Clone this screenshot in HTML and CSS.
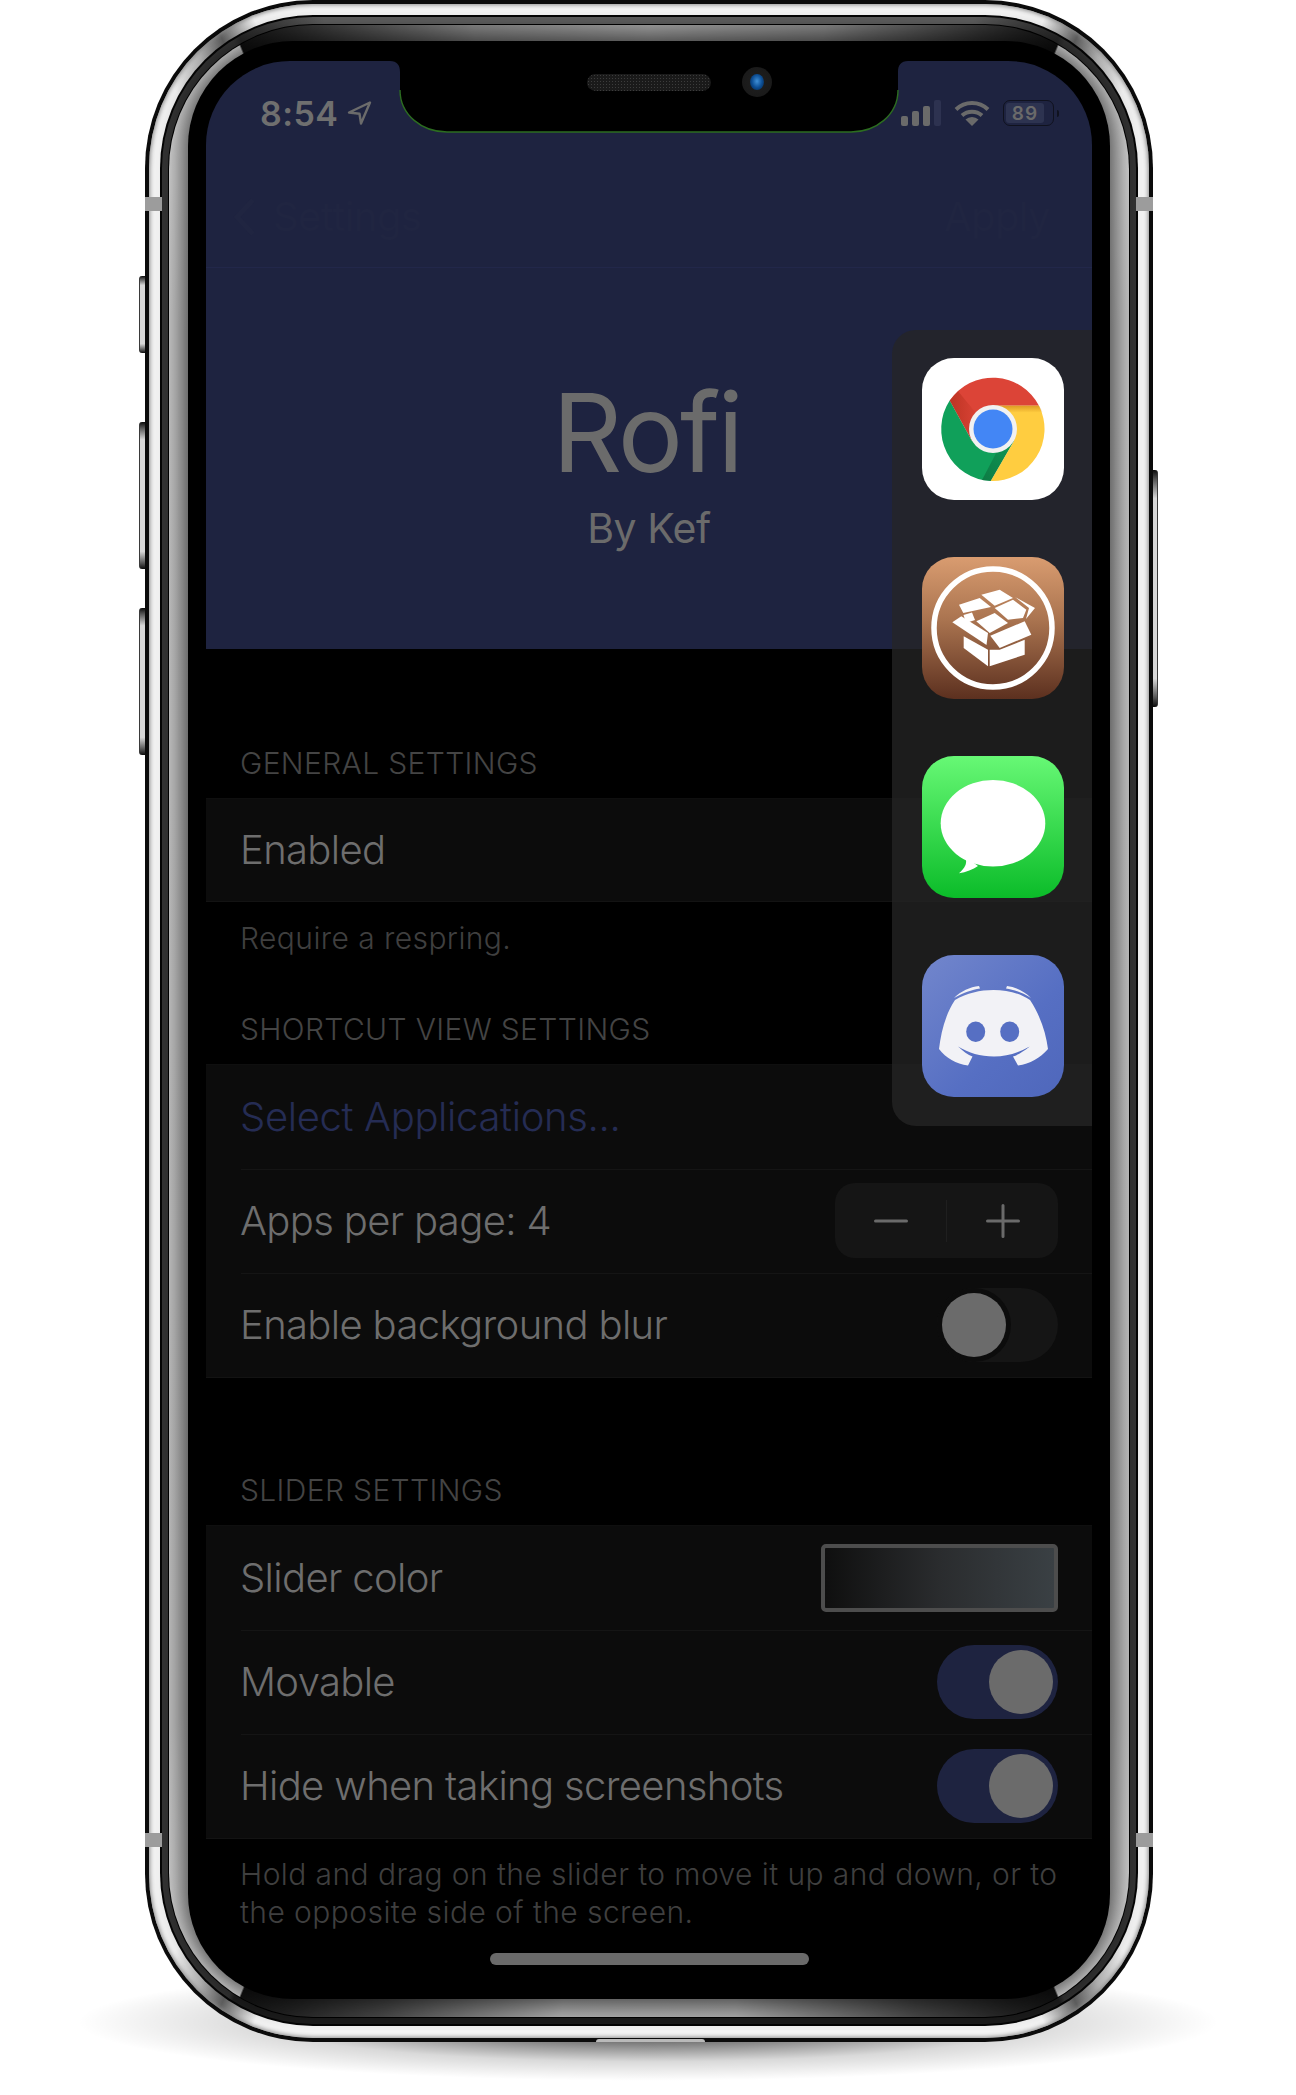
FILE: index.html
```html
<!DOCTYPE html>
<html lang="en">
<head>
<meta charset="utf-8">
<title>Rofi</title>
<link rel="stylesheet" href="styles.css">
</head>
<body>
<div class="stage">
  <div class="phone">
    <span class="btn btn-silent"></span>
    <span class="btn btn-volup"></span>
    <span class="btn btn-voldown"></span>
    <span class="btn btn-power"></span>
    <div class="ring-outer"><div class="ring-white"><div class="ring-thin"><div class="ring-grey"><div class="ring-hair"><div class="ring-silver"><div class="bezel">
      <main class="screen">
        <header class="top">
          <div class="status">
            <div class="status-left">
              <span class="time">8:54</span>
              <svg class="arrow" width="25" height="24" viewBox="0 0 25 24"><path d="M23 1.5 2 11.5l10.5 1.2L14 22.5z" fill="none" stroke="#6b6b6b" stroke-width="2.4" stroke-linejoin="round"/></svg>
            </div>
            <div class="status-right">
              <svg width="40" height="26" viewBox="0 0 40 26"><rect x="0" y="16" width="7" height="10" rx="2" fill="#6a6a6a"/><rect x="11" y="11" width="7" height="15" rx="2" fill="#6a6a6a"/><rect x="22" y="6" width="7" height="20" rx="2" fill="#6a6a6a"/><rect x="33" y="0" width="7" height="26" rx="2" fill="#2d3250"/></svg>
              <svg width="36" height="26" viewBox="0 0 36 26"><path d="M2 9.500a23 23 0 0 1 32 0M8 15.500a15 15 0 0 1 20 0" fill="none" stroke="#6a6a6a" stroke-width="4"/><path d="M18 26 11.500 19.500a9.500 9.500 0 0 1 13 0z" fill="#6a6a6a"/></svg>
              <div class="battery">
                <div class="battery-body"><span class="battery-fill">89</span></div>
                <span class="battery-nub"></span>
              </div>
            </div>
          </div>
          <nav class="navbar">
            <svg class="chev" width="24" height="40" viewBox="0 0 24 40"><path d="M20 3 4 20l16 17" fill="none" stroke="#202541" stroke-width="5"/></svg>
            <span class="nav-back">Settings</span>
            <span class="nav-apply">Apply</span>
          </nav>
        </header>
        <section class="hero">
          <h1 class="hero-title">Rofi</h1>
          <p class="hero-sub">By Kef</p>
        </section>

        <h2 class="head head-first">GENERAL SETTINGS</h2>
        <div class="group">
          <div class="row row-short"><span class="label">Enabled</span></div>
        </div>
        <p class="note note-first">Require a respring.</p>

        <h2 class="head head-second">SHORTCUT VIEW SETTINGS</h2>
        <div class="group">
          <div class="row"><span class="label link">Select Applications...</span></div>
          <div class="row row-sep">
            <span class="label">Apps per page: 4</span>
            <div class="stepper">
              <span class="step step-minus"><svg width="34" height="4" viewBox="0 0 34 4"><path d="M1.500 2h31" stroke="#6a6a6a" stroke-width="3" stroke-linecap="round"/></svg></span>
              <span class="step"><svg width="34" height="34" viewBox="0 0 34 34"><path d="M1.500 17h31M17 1.500v31" stroke="#6a6a6a" stroke-width="3" stroke-linecap="round"/></svg></span>
            </div>
          </div>
          <div class="row row-sep">
            <span class="label">Enable background blur</span>
            <span class="toggle"><span class="knob knob-off"></span></span>
          </div>
        </div>

        <h2 class="head head-third">SLIDER SETTINGS</h2>
        <div class="group">
          <div class="row">
            <span class="label">Slider color</span>
            <span class="swatch"></span>
          </div>
          <div class="row row-sep">
            <span class="label">Movable</span>
            <span class="toggle toggle-on"><span class="knob"></span></span>
          </div>
          <div class="row row-sep">
            <span class="label">Hide when taking screenshots</span>
            <span class="toggle toggle-on"><span class="knob"></span></span>
          </div>
        </div>
        <p class="note note-last">Hold and drag on the slider to move it up and down, or to the opposite side of the screen.</p>
        <div class="home-wrap"><span class="home"></span></div>

        <aside class="dock">
          <svg class="app" width="142" height="142" viewBox="0 0 142 142">
            <defs>
              <linearGradient id="cy" x1="0" y1="0" x2="0" y2="1"><stop offset="0" stop-color="#d99c70"/><stop offset=".45" stop-color="#a9734f"/><stop offset="1" stop-color="#5c301f"/></linearGradient>
              <linearGradient id="ms" x1="0" y1="0" x2="0" y2="1"><stop offset="0" stop-color="#67f875"/><stop offset="1" stop-color="#0bbc29"/></linearGradient>
              <linearGradient id="dc" x1="0" y1="0" x2="1" y2="1"><stop offset="0" stop-color="#7286cc"/><stop offset=".6" stop-color="#566fc3"/><stop offset="1" stop-color="#4f67bb"/></linearGradient>
              <linearGradient id="redsh" x1="0" y1="0" x2="1" y2="0"><stop offset="0" stop-color="#a52714" stop-opacity=".55"/><stop offset="1" stop-color="#a52714" stop-opacity="0"/></linearGradient>
              <linearGradient id="yelsh" x1="0" y1="0" x2="0" y2="1"><stop offset="0" stop-color="#c77a10" stop-opacity=".6"/><stop offset="1" stop-color="#c77a10" stop-opacity="0"/></linearGradient>
              <linearGradient id="grnsh" x1="1" y1="0" x2="0" y2="1"><stop offset="0" stop-color="#0b5c32" stop-opacity=".1"/><stop offset="1" stop-color="#0b5c32" stop-opacity=".55"/></linearGradient>
            </defs>
            <rect width="142" height="142" rx="32" fill="#fff"/>
            <path d="M117 47.700A52 52 0 0 0 27.700 42.600L50 83 71 47.700z" fill="#dc4437"/>
            <path d="M27.700 42.600A52 52 0 0 0 68.700 123L92 83H50z" fill="#10a05a"/>
            <path d="M68.700 123A52 52 0 0 0 117 47.700H71L92 83z" fill="#ffcd40"/>
            <path d="M27.700 42.600 50 83 58 60 36 33z" fill="url(#redsh)"/>
            <path d="M71 47.700h46l4 7H78z" fill="url(#yelsh)"/>
            <path d="M68.700 123 92 83 82 80 60 122z" fill="url(#grnsh)"/>
            <circle cx="71" cy="71" r="24" fill="#f1f1f1"/>
            <circle cx="71" cy="71" r="19.500" fill="#4386f5"/>
          </svg>
          <svg class="app" width="142" height="142" viewBox="0 0 142 142">
            <rect width="142" height="142" rx="32" fill="url(#cy)"/>
            <circle cx="71" cy="71" r="59" fill="none" stroke="#fff" stroke-width="5.500"/>
            <g fill="#fff">
              <path d="M41.700 79.300 66 92.700v16.600L41.700 91z"/>
              <path d="M67.700 109.300V92.700h10l25-10v15z"/>
              <path d="M68.300 78.700 102.700 64.300 109.300 77.700 77.700 91z"/>
              <path d="M30.300 65.300 39.300 59.300 66 76l-1.500 12z"/>
              <path d="M54.300 64.300 72.700 56 86 66 67.700 76z"/>
              <path d="M59.300 37.700 77.700 32.700 91 41 72.700 48.700z"/>
              <path d="M37 47.700 57.700 41 69 50 41.300 56z"/>
              <path d="M41.500 58 50 55.500 53 63 44 66z"/>
              <path d="M72.700 51 91 42.700 104.300 52.700 101 61 86 62.700z"/>
              <path d="M93 40 113 51 104 62 107 51z"/>
            </g>
          </svg>
          <svg class="app" width="142" height="142" viewBox="0 0 142 142">
            <rect width="142" height="142" rx="32" fill="url(#ms)"/>
            <ellipse cx="71" cy="67.300" rx="52.300" ry="43.300" fill="#fff"/>
            <path d="M40 98c4 3 5 7 3.500 11-1.500 3.500-4 6-6.500 8.300 7-1 14-4 19-7.300z" fill="#fff"/>
          </svg>
          <svg class="app" width="142" height="142" viewBox="0 0 142 142">
            <rect width="142" height="142" rx="32" fill="url(#dc)"/>
            <path d="M33 45C45 38 58 35 71.500 35 85 35 98 38 108 45c10 15 16 33 18 49-8 9-18 15-30 16.500l-5-9c5-1.500 11-5.500 16.700-10C96 98 85 101.500 72 101.500 58 101.500 47 98 36 91.500c5 4.500 10 8.500 14.500 10l-4.500 9C34 109 24 103 17 94 19 78 23 60 33 45z" fill="#f2f2f6"/>
            <ellipse cx="53.700" cy="76.700" rx="9.500" ry="10.300" fill="#566fc3"/>
            <ellipse cx="87.700" cy="76.700" rx="9.500" ry="10.300" fill="#566fc3"/>
            <path d="M32 43C39 36 48 32 57 31l1 2.500C50 34.500 41 38 32 43zM109 43C102 36 93 32 85 31l-1 2.500C92 34.500 101 38 109 43z" fill="#f2f2f6"/>
          </svg>
        </aside>

        <div class="notch">
          <svg class="notch-shape" width="518" height="72" viewBox="0 0 518 72">
            <path d="M0 0C7 0 10 4 10 11V29C10 54 32 71 57 71H461C486 71 508 54 508 29V11C508 4 511 0 518 0z" fill="#000"/>
            <path d="M10 29C10 54 32 71 57 71H461C486 71 508 54 508 29" fill="none" stroke="#2c6d20" stroke-width="1.400"/>
          </svg>
          <span class="speaker"></span>
          <span class="camera"></span>
        </div>
      </main>
    </div></div></div></div></div></div></div>
    <span class="band band-lt"></span>
    <span class="band band-rt"></span>
    <span class="band band-lb"></span>
    <span class="band band-rb"></span>
    <span class="port"></span>
  </div>
</div>
</body>
</html>
```

FILE: styles.css
```css
* { box-sizing: border-box; }
html, body { margin: 0; padding: 0; background: #fff; }
body { font-family: Inter, "Liberation Sans", sans-serif; }

.stage {
  width: 1296px;
  height: 2095px;
  padding-left: 145px;
  overflow: hidden;
  isolation: isolate;
}
.phone { position: relative; width: 1008px; height: 2042px; }
.phone::after {
  content: "";
  position: absolute;
  z-index: -2;
  left: -117px;
  top: 1958px;
  width: 1240px;
  height: 128px;
  background: radial-gradient(closest-side, rgba(0,0,0,.8) 0, rgba(0,0,0,.55) 30%, rgba(0,0,0,.15) 62%, rgba(0,0,0,0) 92%);
}

/* device rings */
.ring-outer, .ring-white, .ring-thin, .ring-grey, .ring-hair, .ring-silver, .bezel { display: flex; }
.ring-outer > *, .ring-white > *, .ring-thin > *, .ring-grey > *, .ring-hair > *, .ring-silver > *, .bezel > * { flex: 1; min-width: 0; }
.ring-outer { height: 100%; padding: 4px; border-radius: 168px; background: #0b0b0b; }
.ring-white {
  padding: 11px 11px 12px;
  border-radius: 164px;
  background: conic-gradient(#f4f4f4 0 21.500deg, #d0d0d0 22deg, #5f5f5f 23.500deg, #b5b5b5 25deg, #f2f2f2 27deg 153deg, #b5b5b5 155deg, #5f5f5f 156.500deg, #d0d0d0 158deg, #f4f4f4 158.500deg 201.500deg, #d0d0d0 202deg, #5f5f5f 203.500deg, #b5b5b5 205deg, #f2f2f2 207deg 333deg, #b5b5b5 335deg, #5f5f5f 336.500deg, #d0d0d0 338deg, #f4f4f4 338.500deg);
  box-shadow: inset 0 0 4px 1px #8a8a8a;
}
.ring-thin { padding: 2px; border-radius: 153px; background: #050505; }
.ring-grey {
  padding: 7px 6px 6px;
  border-radius: 151px;
  background: conic-gradient(#5e5e5e 0 18deg, #262626 22.600deg, #333 23deg 157deg, #1c1c1c 157.300deg 203deg, #333 203.300deg 337deg, #262626 337.400deg, #5e5e5e 342deg);
}
.ring-hair { padding: 1px; border-radius: 145px; background: #000; }
.ring-silver {
  padding: 16px 19px 18px;
  border-radius: 144px;
  background: conic-gradient(#a5a5a5 0, #8a8a8a 10deg, #3d3d3d 18deg, #0f0f0f 22.700deg, #e0e0e0 22.800deg, #c8c8c8 34deg, #c4c4c4 146deg, #e0e0e0 157.200deg, #111 157.300deg, #4a4a4a 165deg, #b0b0b0 175deg, #b4b4b4 185deg, #4a4a4a 195deg, #111 202.700deg, #e0e0e0 202.800deg, #c4c4c4 214deg, #c8c8c8 326deg, #e0e0e0 337.200deg, #0f0f0f 337.300deg, #3d3d3d 342deg, #8a8a8a 350deg, #a5a5a5 360deg);
}
.bezel {
  padding: 20px 18px 19px;
  border-radius: 105px;
  background: #000;
  box-shadow: 0 0 24px 5px rgba(0,0,0,.68);
}

/* hardware details */
.btn {
  position: absolute;
  left: -6px;
  width: 9px;
  z-index: -1;
  border-left: 1.500px solid #3a3a3a;
  border-radius: 3px 0 0 3px;
  background: linear-gradient(#0a0a0a 0, #555 4%, #d8d8d8 12%, #d8d8d8 88%, #555 96%, #0a0a0a 100%);
}
.btn-silent { top: 276px; height: 77px; }
.btn-volup { top: 422px; height: 147px; }
.btn-voldown { top: 608px; height: 147px; }
.btn-power {
  left: auto;
  right: -5px;
  top: 470px;
  height: 237px;
  border-left: 0;
  border-right: 1.500px solid #3a3a3a;
  border-radius: 0 3px 3px 0;
}
.band { position: absolute; width: 17px; height: 14px; background: #9c9c9c; }
.band-lt { left: 0; top: 197px; }
.band-rt { right: 0; top: 197px; }
.band-lb { left: 0; top: 1833px; }
.band-rb { right: 0; top: 1833px; }
.port {
  position: absolute;
  left: 451px;
  top: 2039px;
  width: 109px;
  height: 3px;
  border-radius: 4px 4px 0 0;
  background: #b9b9b9;
}

/* screen */
.screen {
  position: relative;
  display: flex;
  flex-direction: column;
  overflow: hidden;
  border-radius: 84px;
  background: #000;
  color: #6b6b6b;
}
.top { background: #1e2340; }
.status {
  display: flex;
  justify-content: space-between;
  height: 105px;
  padding: 36px 33px 0 54px;
}
.status-left { display: flex; align-items: center; gap: 9px; height: 34px; }
.time { font-size: 34px; line-height: 34px; font-weight: 600; letter-spacing: .4px; color: #6f6f6f; }
.arrow { margin-top: -3px; }
.status-right { display: flex; align-items: center; height: 34px; gap: 13px; margin-top: -1px; }
.battery { display: flex; align-items: center; gap: 3px; }
.battery-body {
  width: 51px;
  height: 26px;
  padding: 2px 9px 2px 2px;
  border: 1.500px solid #10121e;
  border-radius: 7px;
}
.battery-fill {
  display: flex;
  align-items: center;
  justify-content: center;
  height: 100%;
  border-radius: 3px;
  background: #2d3350;
  font-size: 19px;
  font-weight: 600;
  letter-spacing: 1px;
  color: #6a6a6a;
}
.battery-nub { width: 2px; height: 7px; border-radius: 0 2px 2px 0; background: #10121e; }
.navbar {
  display: flex;
  align-items: center;
  height: 102px;
  padding: 0 42px 0 27px;
  border-bottom: 1px solid #22274a;
  color: #202541;
  font-size: 40px;
  letter-spacing: -.6px;
}
.nav-back { margin-left: 16px; flex: 1; }

.hero {
  height: 381px;
  padding-top: 109px;
  background: #1e2340;
  text-align: center;
}
.hero-title { margin: 0; padding-right: 5px; font-size: 109px; line-height: 110px; font-weight: 400; letter-spacing: -3px; color: #6b6b6b; }
.hero-sub { margin: 16px 0 0; font-size: 41px; line-height: 50px; font-weight: 400; letter-spacing: -.5px; color: #6b6b6b; }

.head {
  margin: 0;
  padding: 0 34px;
  font-size: 30px;
  line-height: 36px;
  font-weight: 300;
  letter-spacing: .35px;
  color: #444;
}
.head-first { margin-top: 96px; margin-bottom: 17px; }
.head-second { margin-top: 53px; margin-bottom: 17px; }
.head-third { margin-top: 94px; margin-bottom: 17px; }

.group {
  background: #0c0c0c;
  border-top: 1px solid #0f0f0f;
  border-bottom: 1px solid #131313;
}
.row {
  position: relative;
  display: flex;
  align-items: center;
  justify-content: space-between;
  height: 104px;
  padding: 0 34px;
}
.row-short { height: 102px; }
.row-sep { box-shadow: inset 35px 0 0 #0c0c0c, inset 0 1px 0 #151515; }
.label { font-size: 40px; line-height: 48px; font-weight: 350; letter-spacing: -.65px; color: #6e6e6e; }
.link { letter-spacing: -.35px; color: #252c54; }

.note {
  margin: 0;
  padding: 0 34px;
  font-size: 30px;
  line-height: 38.500px;
  font-weight: 300;
  letter-spacing: .42px;
  color: #3f3f3f;
}
.note-first { margin-top: 17px; }
.note-last { margin-top: 16px; }
.home-wrap { display: flex; justify-content: center; padding-top: 21px; }
.home { width: 319px; height: 12px; border-radius: 6px; background: #6a6a6a; }

.stepper {
  display: flex;
  align-items: center;
  width: 223px;
  height: 75px;
  border-radius: 20px;
  background: #151515;
}
.step { flex: 1; display: flex; align-items: center; justify-content: center; }
.step-minus { height: 42px; border-right: 1px solid #1f1f1f; }

.toggle {
  display: flex;
  align-items: center;
  width: 121px;
  height: 74px;
  padding: 0 5px;
  border-radius: 37px;
  background: #151515;
}
.toggle-on { justify-content: flex-end; background: #1e2340; }
.knob { width: 64px; height: 64px; border-radius: 50%; background: #6b6b6b; }
.knob-off { box-shadow: 0 0 0 5px #0c0c0c; }
.swatch {
  width: 237px;
  height: 68px;
  border: 4px solid #4d4d4d;
  border-radius: 5px;
  background: linear-gradient(90deg, #0f0f0f, #2a2c2e 50%, #3a4044);
}

/* overlays */
.dock {
  position: absolute;
  top: 269px;
  right: 0;
  display: flex;
  flex-direction: column;
  gap: 57px;
  width: 200px;
  padding: 28px 28px 29px 30px;
  border-radius: 24px 0 0 24px;
  background: rgba(37,37,37,.75);
}
.app { display: block; }
.notch {
  position: absolute;
  top: 0;
  left: 184px;
  display: flex;
  align-items: center;
  gap: 31px;
  width: 518px;
  height: 72px;
  padding: 0 0 30px 197px;
}
.notch-shape { position: absolute; top: 0; left: 0; }
.speaker {
  position: relative;
  width: 124px;
  height: 17px;
  border-radius: 9px;
  background: #1a1a1a radial-gradient(circle, #3c3c3c 0 .8px, transparent 1px) 0 0 / 3px 3px;
}
.camera {
  position: relative;
  width: 30px;
  height: 30px;
  border-radius: 50%;
  background: radial-gradient(circle at 50% 50%, #1f1f1f 0, #1a1a1a 70%, #0b0b0b 100%);
  display: flex;
  align-items: center;
  justify-content: center;
}
.camera::after {
  content: "";
  width: 14px;
  height: 16px;
  border-radius: 50%;
  background: radial-gradient(ellipse at 50% 45%, #3f8fd6 0, #0d4f96 50%, #03203f 100%);
}
```
